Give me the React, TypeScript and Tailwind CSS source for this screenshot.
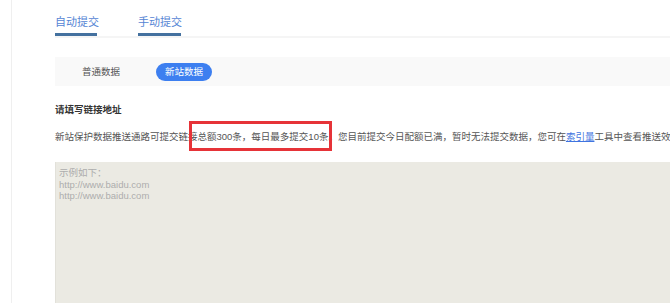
import React from "react";

export default function App() {
  return (
    <div className="relative h-[303px] w-[670px] overflow-hidden bg-white pl-[11px] font-['Liberation_Sans','Noto_Sans_CJK_SC',sans-serif]">
      <div className="h-full border-l border-[#efefef] pl-[43px]">
        {/* Tabs */}
        <div className="flex gap-[41px] border-b-2 border-[#f5f5f5]">
          <div className="flex w-[42px] flex-col pt-[15px]">
            <span className="text-[11px] leading-[14px] text-[#5584d4] whitespace-nowrap">自动提交</span>
            <div className="mt-[4px] h-[3px] bg-[#44719f]" />
          </div>
          <div className="flex w-[43px] flex-col pt-[15px]">
            <span className="text-[11px] leading-[14px] text-[#5584d4] whitespace-nowrap">手动提交</span>
            <div className="mt-[4px] h-[3px] bg-[#44719f]" />
          </div>
        </div>

        {/* Segmented band */}
        <div className="mt-[19px] flex h-[29px] items-center bg-[#f9f9f9] pl-[27px]">
          <span className="text-[9.5px] leading-[12px] text-[#555] whitespace-nowrap">普通数据</span>
          <span className="ml-[36px] flex h-[18px] w-[56px] items-center justify-center rounded-full bg-[#3d7ff0] text-[9.5px] leading-[12px] text-white whitespace-nowrap">
            新站数据
          </span>
        </div>

        {/* Title */}
        <div className="mt-[18px] text-[9.5px] font-bold leading-[12px] text-[#333] whitespace-nowrap">请填写链接地址</div>

        {/* Description */}
        <p className="mt-[15px] whitespace-nowrap text-[9.5px] leading-[12px] text-[#555]">
          新站保护数据推送通路可提交链接总额300条，每日最多提交10条。您目前提交今日配额已满，暂时无法提交数据，您可在
          <span className="text-[#3f74e0] underline">索引量</span>
          工具中查看推送效果
        </p>

        {/* Textarea */}
        <div className="mt-[19px] h-[200px] w-[700px] border-l border-[#e2e1da] bg-[#ebeae3] pl-[3px] pt-[5px] text-[9.5px] leading-[11.7px] text-[#adadad]">
          <div>示例如下：</div>
          <div>http://www.baidu.com</div>
          <div>http://www.baidu.com</div>
        </div>
      </div>

      {/* Red highlight box */}
      <div className="absolute left-[189px] top-[121px] h-[30px] w-[143px] border-[3px] border-[#e63338]" />
    </div>
  );
}
